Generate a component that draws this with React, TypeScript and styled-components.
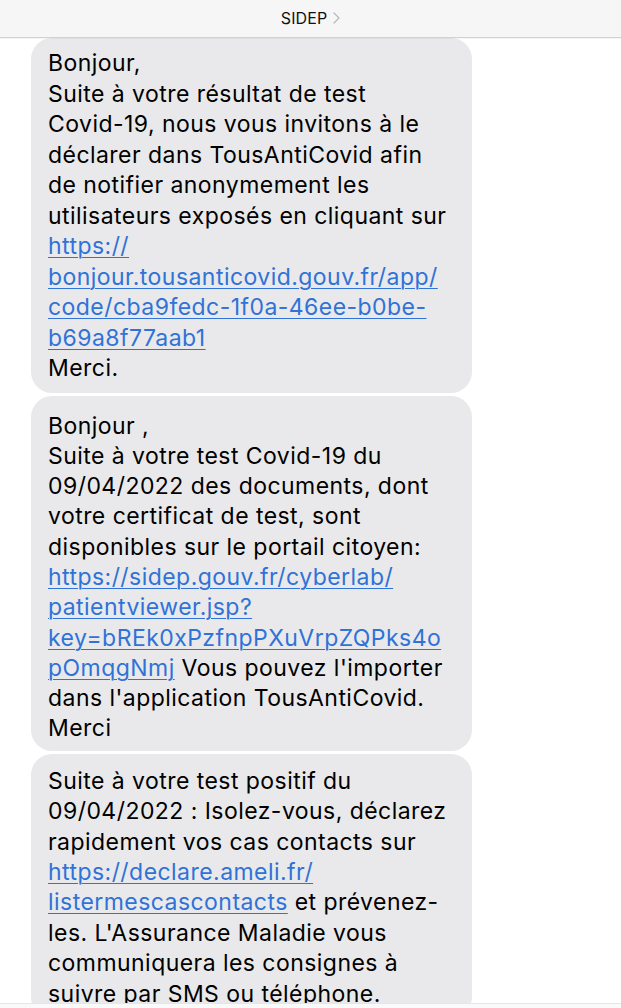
import React from "react";
import styled, { createGlobalStyle } from "styled-components";

const GlobalStyle = createGlobalStyle`
  html, body { margin: 0; padding: 0; background: #ffffff; }
  body { font-family: Inter, "Noto Sans", "Liberation Sans", sans-serif; }
  * { box-sizing: border-box; }
`;

const Screen = styled.div`
  width: 621px;
  height: 1008px;
  display: flex;
  flex-direction: column;
  overflow: hidden;
  background: #ffffff;
`;

const Header = styled.header`
  height: 38px;
  flex: none;
  display: flex;
  align-items: center;
  justify-content: center;
  gap: 6px;
  padding-bottom: 2px;
  background: #f6f6f6;
  border-bottom: 1px solid #d2d2d2;
  box-shadow: 0 1px 1px rgba(0, 0, 0, 0.04);
  position: relative;
  z-index: 1;
`;

const Title = styled.span`
  font-size: 16px;
  color: #111111;
  letter-spacing: 0.1px;
`;

const Chevron = styled.svg`
  width: 7px;
  height: 12px;
  margin-top: 1px;
`;

const Thread = styled.main`
  flex: 1;
  min-height: 0;
  overflow: hidden;
  display: flex;
  flex-direction: column;
  gap: 3px;
  padding-left: 31px;
`;

const Bubble = styled.div<{ $padTop: number; $padBottom: number; $lineHeight: number }>`
  width: 441px;
  flex: none;
  background: #e9e9eb;
  border-radius: 21px;
  padding: ${(p) => p.$padTop}px 15px ${(p) => p.$padBottom}px 17px;
  color: #000000;
  font-size: 23px;
  letter-spacing: 0.45px;
  line-height: ${(p) => p.$lineHeight}px;
`;

const Line = styled.div`
  white-space: nowrap;
`;

const Link = styled.a`
  color: #2f72d8;
  text-decoration: underline;
  text-decoration-thickness: 1px;
  text-underline-offset: 3px;
`;

const Footer = styled.div`
  height: 5px;
  flex: none;
  background: #fafafa;
  border-top: 1px solid #e6e6e6;
`;

export default function App() {
  return (
    <Screen>
      <GlobalStyle />
      <Header>
        <Title>SIDEP</Title>
        <Chevron viewBox="0 0 7 12">
          <path d="M1 1l5 5-5 5" fill="none" stroke="#b8b8bc" strokeWidth="1.3" strokeLinecap="round" strokeLinejoin="round" />
        </Chevron>
      </Header>
      <Thread>
        <Bubble $padTop={10} $padBottom={9} $lineHeight={30.5}>
          <Line>Bonjour,</Line>
          <Line>Suite à votre résultat de test</Line>
          <Line>Covid-19, nous vous invitons à le</Line>
          <Line>déclarer dans TousAntiCovid afin</Line>
          <Line>de notifier anonymement les</Line>
          <Line>utilisateurs exposés en cliquant sur</Line>
          <Line><Link href="#">https://</Link></Line>
          <Line><Link href="#">bonjour.tousanticovid.gouv.fr/app/</Link></Line>
          <Line><Link href="#">code/cba9fedc-1f0a-46ee-b0be-</Link></Line>
          <Line><Link href="#">b69a8f77aab1</Link></Line>
          <Line>Merci.</Line>
        </Bubble>
        <Bubble $padTop={15} $padBottom={7} $lineHeight={30.3}>
          <Line>Bonjour ,</Line>
          <Line>Suite à votre test Covid-19 du</Line>
          <Line>09/04/2022 des documents, dont</Line>
          <Line>votre certificat de test, sont</Line>
          <Line>disponibles sur le portail citoyen:</Line>
          <Line><Link href="#">https://sidep.gouv.fr/cyberlab/</Link></Line>
          <Line><Link href="#">patientviewer.jsp?</Link></Line>
          <Line><Link href="#">key=bREk0xPzfnpPXuVrpZQPks4o</Link></Line>
          <Line><Link href="#">pOmqgNmj</Link> Vous pouvez l'importer</Line>
          <Line>dans l'application TousAntiCovid.</Line>
          <Line>Merci</Line>
        </Bubble>
        <Bubble $padTop={12} $padBottom={9} $lineHeight={30.4}>
          <Line>Suite à votre test positif du</Line>
          <Line>09/04/2022 : Isolez-vous, déclarez</Line>
          <Line>rapidement vos cas contacts sur</Line>
          <Line><Link href="#">https://declare.ameli.fr/</Link></Line>
          <Line><Link href="#">listermescascontacts</Link> et prévenez-</Line>
          <Line>les. L'Assurance Maladie vous</Line>
          <Line>communiquera les consignes à</Line>
          <Line>suivre par SMS ou téléphone.</Line>
        </Bubble>
      </Thread>
      <Footer />
    </Screen>
  );
}
